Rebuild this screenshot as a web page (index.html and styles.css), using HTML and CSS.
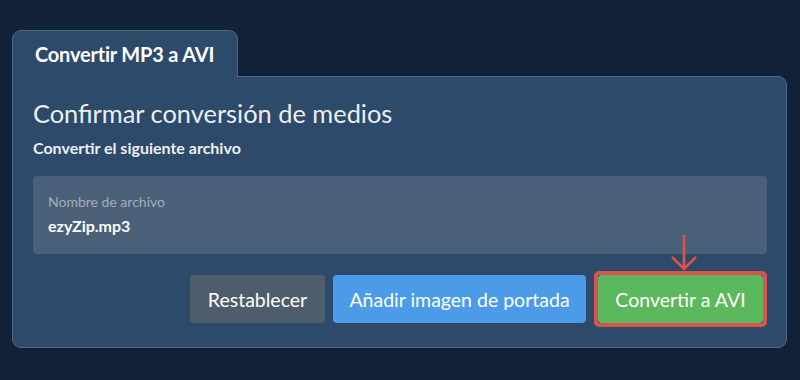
FILE: index.html
```html
<!DOCTYPE html>
<html lang="es">
<head>
<meta charset="utf-8">
<title>Convertir MP3 a AVI</title>
<link rel="stylesheet" href="styles.css">
</head>
<body>
<div class="wrap">
  <div class="tab">Convertir MP3 a AVI</div>
  <div class="panel">
    <h2 class="title">Confirmar conversión de medios</h2>
    <p class="subtitle">Convertir el siguiente archivo</p>
    <div class="field">
      <div class="label">Nombre de archivo</div>
      <div class="value">ezyZip.mp3</div>
    </div>
    <div class="actions">
      <button class="btn btn-gray">Restablecer</button>
      <button class="btn btn-blue">Añadir imagen de portada</button>
      <span class="highlight">
        <svg class="arrow" width="30" height="38" viewBox="0 0 30 38">
          <path d="M15 1 V35 M3 23 L15 35 L27 23" fill="none" stroke="#d9534f" stroke-width="2.6"/>
        </svg>
        <button class="btn btn-green">Convertir a AVI</button>
      </span>
    </div>
  </div>
</div>
</body>
</html>
```

FILE: styles.css
```css
html, body {
  margin: 0;
  padding: 0;
}
body {
  background: #112238;
  font-family: Lato, "Open Sans", "Liberation Sans", sans-serif;
  color: #eceff2;
  width: 800px;
  height: 380px;
  overflow: hidden;
}
.wrap {
  padding: 30px 13px 0 12px;
}
.tab {
  display: inline-block;
  box-sizing: border-box;
  width: 226px;
  height: 47px;
  padding: 11px 0 0 22px;
  font-weight: 700;
  font-size: 20px;
  line-height: 24px;
  color: #ffffff;
  background: #2d4a6a;
  border: 1px solid #4d6987;
  border-bottom: none;
  border-radius: 9px 9px 0 0;
  position: relative;
  z-index: 1;
  margin-bottom: -1px;
  letter-spacing: -0.2px;
}
.panel {
  box-sizing: border-box;
  height: 272px;
  background: #2d4a6a;
  border: 1px solid #4d6987;
  border-radius: 0 9px 9px 9px;
  padding: 20px 19px 0 20px;
}
.title {
  margin: 0;
  font-weight: 400;
  font-size: 25.4px;
  line-height: 32px;
  color: #eceff2;
}
.subtitle {
  margin: 9px 0 0 0;
  font-weight: 700;
  font-size: 16px;
  line-height: 20px;
  color: #eceff2;
}
.field {
  margin-top: 18px;
  height: 78px;
  box-sizing: border-box;
  background: #4a6079;
  border-radius: 4px;
  padding: 17px 15px 0 15px;
}
.label {
  font-size: 14px;
  line-height: 17px;
  color: #a3adb9;
}
.value {
  margin-top: 6px;
  font-weight: 700;
  font-size: 16px;
  line-height: 19px;
  color: #ffffff;
}
.actions {
  margin-top: 17px;
  display: flex;
  justify-content: flex-end;
  align-items: center;
  gap: 8px;
}
.btn {
  font-family: Lato, "Open Sans", "Liberation Sans", sans-serif;
  font-size: 19.5px;
  color: #ffffff;
  border: none;
  border-radius: 4px;
  height: 48px;
  padding: 0 10px;
  cursor: pointer;
}
.btn-gray {
  background: #4e5d6c;
  width: 135px;
}
.btn-blue {
  background: #4c9be8;
  width: 253px;
}
.btn-green {
  background: #5cb85c;
  width: 165px;
  display: block;
}
.highlight {
  position: relative;
  display: block;
  border: 4px solid #d9534f;
  border-radius: 5px;
}
.arrow {
  position: absolute;
  left: 71px;
  top: -41px;
}
```
